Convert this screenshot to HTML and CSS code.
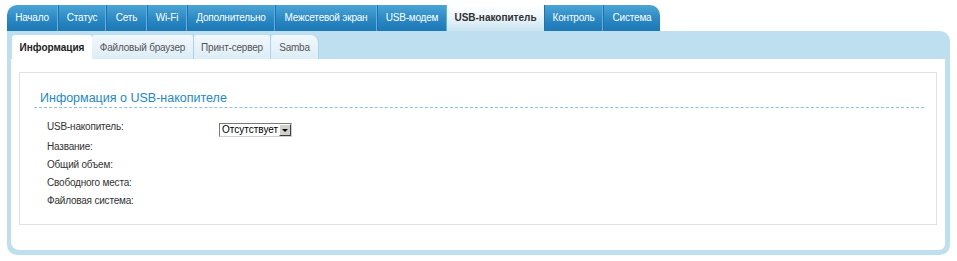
FILE: index.html
```html
<!DOCTYPE html>
<html lang="ru">
<head>
<meta charset="utf-8">
<title>USB-накопитель</title>
<link rel="stylesheet" href="styles.css">
</head>
<body>
<div class="page">
  <nav class="topnav">
    <a class="tab first">Начало</a>
    <a class="tab">Статус</a>
    <a class="tab">Сеть</a>
    <a class="tab">Wi-Fi</a>
    <a class="tab">Дополнительно</a>
    <a class="tab">Межсетевой экран</a>
    <a class="tab">USB-модем</a>
    <a class="tab active">USB-накопитель</a>
    <a class="tab">Контроль</a>
    <a class="tab last">Система</a>
  </nav>
  <div class="panel">
    <div class="subnav">
      <a class="subtab active">Информация</a>
      <a class="subtab">Файловый браузер</a>
      <a class="subtab">Принт-сервер</a>
      <a class="subtab">Samba</a>
    </div>
    <div class="content">
      <div class="box">
        <h2 class="heading">Информация о USB-накопителе</h2>
        <div class="fields">
          <div class="label">USB-накопитель:</div>
          <div class="value">
            <span class="select"><span class="select-text">Отсутствует</span><span class="select-btn"><span class="arrow"></span></span></span>
          </div>
          <div class="label">Название:</div><div class="value"></div>
          <div class="label">Общий объем:</div><div class="value"></div>
          <div class="label">Свободного места:</div><div class="value"></div>
          <div class="label">Файловая система:</div><div class="value"></div>
        </div>
      </div>
    </div>
  </div>
</div>
</body>
</html>
```

FILE: styles.css
```css
html, body {
  margin: 0;
  padding: 0;
  background: #ffffff;
}
body {
  font-family: "Liberation Sans", Arial, sans-serif;
  font-size: 10px;
  color: #333333;
}
.page {
  padding: 5px 0 0 7px;
  width: 943px;
}
.topnav {
  display: flex;
  height: 26px;
}
.tab {
  display: flex;
  align-items: center;
  justify-content: center;
  height: 26px;
  box-sizing: border-box;
  color: #ffffff;
  font-size: 10px;
  letter-spacing: -0.2px;
  background: linear-gradient(#4ba5d6, #2a88c3 55%, #1d78b6);
  border-right: 1px solid #5fb0de;
  border-left: 1px solid #1e72ad;
  padding: 0 0 1px 0;
}
.tab:nth-child(1) { width: 51px; border-left: none; border-top-left-radius: 10px; }
.tab:nth-child(2) { width: 48px; }
.tab:nth-child(3) { width: 41px; }
.tab:nth-child(4) { width: 40px; }
.tab:nth-child(5) { width: 88px; }
.tab:nth-child(6) { width: 102px; }
.tab:nth-child(7) { width: 70px; }
.tab:nth-child(8) { width: 97px; }
.tab:nth-child(9) { width: 59px; }
.tab:nth-child(10) { width: 57px; border-right: none; border-top-right-radius: 10px; }
.tab.active {
  background: linear-gradient(#ffffff, #f0f8fb 40%, #c8e3f0);
  color: #333333;
  font-weight: bold;
  letter-spacing: 0;
  border-left: none;
  border-right: none;
}
.panel {
  background: #bddff0;
  border-radius: 0 10px 10px 10px;
  padding: 0 5px 5px 4px;
}
.subnav {
  display: flex;
  height: 24px;
  padding: 4px 0 0 1px;
}
.subtab {
  display: flex;
  align-items: center;
  justify-content: center;
  box-sizing: border-box;
  height: 24px;
  font-size: 10px;
  letter-spacing: -0.2px;
  color: #555555;
  background: linear-gradient(#f1f8fc, #dcedf6);
  border-right: 1px solid #a9d3e8;
  border-top-left-radius: 3px;
  border-top-right-radius: 3px;
  padding-top: 1px;
}
.subtab:nth-child(1) { width: 80px; }
.subtab:nth-child(2) { width: 102px; }
.subtab:nth-child(3) { width: 77px; }
.subtab:nth-child(4) { width: 48px; border-top-right-radius: 8px; }
.subtab.active {
  background: #ffffff;
  color: #222222;
  font-weight: bold;
  letter-spacing: 0;
  border-right: none;
  border-top-right-radius: 3px;
}
.content {
  background: #ffffff;
  border-radius: 0 0 6px 8px;
  padding: 13px 8px 25px 8px;
}
.box {
  box-sizing: border-box;
  border: 1px solid #e2e2e2;
  height: 153px;
  padding: 18px 12px 0 14px;
}
.heading {
  margin: 0;
  font-weight: normal;
  font-size: 12.5px;
  color: #1d88c6;
  padding: 0 0 1px 6px;
  line-height: 15px;
  border-bottom: 1px dashed #8fc2e0;
}
.fields {
  display: grid;
  grid-template-columns: 172px auto;
  grid-auto-rows: 18px;
  grid-template-rows: 20px;
  padding: 13px 0 0 13px;
  font-size: 10px;
  letter-spacing: -0.2px;
  color: #333333;
  align-items: start;
}
.label {
  line-height: 12px;
}
.value {
  line-height: 12px;
}
.select {
  display: inline-flex;
  height: 12px;
  border: 1px solid #7a7a7a;
  border-right-color: #d0d0d0;
  border-bottom-color: #d0d0d0;
  background: #ffffff;
  position: relative;
  top: 2px;
  letter-spacing: 0;
}
.select-text {
  padding: 0 1px 0 2px;
  line-height: 12px;
  font-size: 10px;
  color: #000000;
}
.select-btn {
  width: 12px;
  height: 12px;
  box-sizing: border-box;
  background: #d4d0c8;
  border: 1px solid;
  border-color: #ffffff #404040 #404040 #ffffff;
  display: flex;
  align-items: center;
  justify-content: center;
}
.arrow {
  width: 0;
  height: 0;
  border-left: 3px solid transparent;
  border-right: 3px solid transparent;
  border-top: 3px solid #000000;
}
```
